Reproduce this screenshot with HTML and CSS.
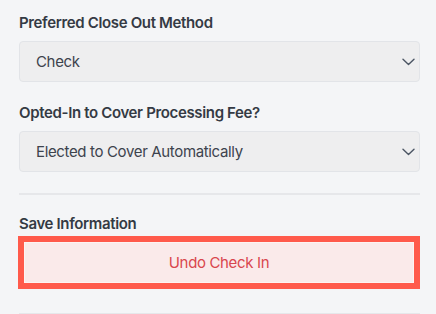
FILE: index.html
```html
<!DOCTYPE html>
<html lang="en">
<head>
<meta charset="utf-8">
<title>Close Out</title>
<link rel="stylesheet" href="styles.css">
</head>
<body>
<div class="panel">
  <div class="field">
    <div class="label">Preferred Close Out Method</div>
    <div class="select">
      <span class="value">Check</span>
      <svg class="chev" width="13" height="8" viewBox="0 0 13 8"><path d="M1 1.2l5.5 5.3 5.5-5.3" fill="none" stroke="#4b5563" stroke-width="1.4" stroke-linecap="round" stroke-linejoin="round"/></svg>
    </div>
  </div>
  <div class="field">
    <div class="label">Opted-In to Cover Processing Fee?</div>
    <div class="select">
      <span class="value">Elected to Cover Automatically</span>
      <svg class="chev" width="13" height="8" viewBox="0 0 13 8"><path d="M1 1.2l5.5 5.3 5.5-5.3" fill="none" stroke="#4b5563" stroke-width="1.4" stroke-linecap="round" stroke-linejoin="round"/></svg>
    </div>
  </div>
  <div class="divider"></div>
  <div class="save">
    <div class="label">Save Information</div>
    <button class="undo">Undo Check In</button>
  </div>
  <div class="divider bottom"></div>
</div>
</body>
</html>
```

FILE: styles.css
```css
html, body {
  margin: 0;
  padding: 0;
  background: #f4f5f7;
}
body {
  font-family: Inter, "Noto Sans", sans-serif;
  color: #333a45;
  letter-spacing: -0.35px;
}
.panel {
  padding: 13px 16px 0 19px;
  display: flex;
  flex-direction: column;
}
.field {
  display: flex;
  flex-direction: column;
  gap: 8px;
  margin-bottom: 21px;
}
.label {
  font-size: 15px;
  line-height: 20px;
  font-weight: 600;
  color: #343a44;
}
.select {
  box-sizing: border-box;
  height: 41px;
  background: #eeeeef;
  border: 1px solid #e2e4e8;
  border-radius: 4px;
  display: flex;
  align-items: center;
  justify-content: space-between;
  padding: 0 4px 0 16px;
}
.value {
  font-size: 15px;
  color: #3d434d;
}
.chev {
  display: block;
}
.divider {
  height: 2px;
  background: #e6e7ea;
}
.save {
  padding-top: 19px;
  display: flex;
  flex-direction: column;
  gap: 2px;
}
.undo {
  box-sizing: border-box;
  height: 53px;
  margin-left: -1px;
  width: 402px;
  background: #faeaea;
  border: 6px solid #ff5a4b;
  box-shadow: inset 0 0 0 1px #fdf3f2;
  font-family: Inter, "Noto Sans", sans-serif;
  font-size: 15px;
  letter-spacing: -0.35px;
  color: #d9464d;
  padding: 0;
  cursor: pointer;
}
.divider.bottom {
  margin-top: 24px;
}
```
